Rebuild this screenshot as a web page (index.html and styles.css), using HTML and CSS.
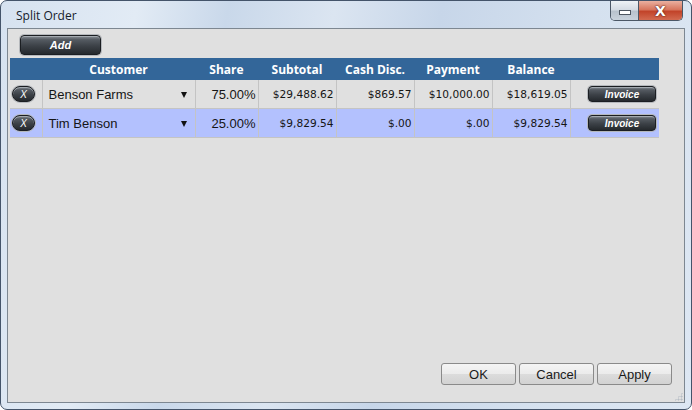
FILE: index.html
```html
<!DOCTYPE html>
<html lang="en">
<head>
    <meta charset="UTF-8">
    <title>Split Order</title>
    <link rel="stylesheet" href="styles.css">
</head>
<body>
    <div class="window">
        <div class="titlebar">
            <span class="title">Split Order</span>
            <div class="controls">
                <button class="min" type="button"><span></span></button>
                <button class="close" type="button">X</button>
            </div>
        </div>
        <div class="client">
            <button class="pill add" type="button">Add</button>
            <table class="grid">
                <colgroup>
                    <col style="width: 32px">
                    <col style="width: 153px">
                    <col style="width: 63px">
                    <col style="width: 78px">
                    <col style="width: 78px">
                    <col style="width: 78px">
                    <col style="width: 78px">
                    <col style="width: 89px">
                </colgroup>
                <thead>
                    <tr>
                        <th></th>
                        <th>Customer</th>
                        <th>Share</th>
                        <th>Subtotal</th>
                        <th>Cash Disc.</th>
                        <th>Payment</th>
                        <th>Balance</th>
                        <th></th>
                    </tr>
                </thead>
                <tbody>
                    <tr>
                        <td class="del"><button class="pill remove" type="button">X</button></td>
                        <td class="combo"><span>Benson Farms</span><i class="arrow"></i></td>
                        <td class="share">75.00%</td>
                        <td class="money">$29,488.62</td>
                        <td class="money">$869.57</td>
                        <td class="money">$10,000.00</td>
                        <td class="money">$18,619.05</td>
                        <td class="inv"><button class="pill invoice" type="button">Invoice</button></td>
                    </tr>
                    <tr class="selected">
                        <td class="del"><button class="pill remove" type="button">X</button></td>
                        <td class="combo"><span>Tim Benson</span><i class="arrow"></i></td>
                        <td class="share">25.00%</td>
                        <td class="money">$9,829.54</td>
                        <td class="money">$.00</td>
                        <td class="money">$.00</td>
                        <td class="money">$9,829.54</td>
                        <td class="inv"><button class="pill invoice" type="button">Invoice</button></td>
                    </tr>
                </tbody>
            </table>
            <div class="actions">
                <button class="btn" type="button">OK</button>
                <button class="btn" type="button">Cancel</button>
                <button class="btn" type="button">Apply</button>
            </div>
            <div class="grip"></div>
        </div>
    </div>
</body>
</html>
```

FILE: styles.css
```css
body {
    margin: 0;
    background-color: #ffffff;
    font-family: "Liberation Sans", Arial, sans-serif;
}

.window {
    width: 692px;
    height: 410px;
    box-sizing: border-box;
    border: 1px solid #44546a;
    border-radius: 7px;
    background: linear-gradient(100deg, #d6e2f0 0%, #e2ebf5 18%, #c9d8ea 30%, #dbe5f1 44%, #c7d6e9 58%, #d5e1ef 78%, #dde7f3 100%);
    display: flex;
    flex-direction: column;
    overflow: hidden;
}

.titlebar {
    height: 27px;
    display: flex;
    justify-content: space-between;
    flex-shrink: 0;
}

.title {
    font-family: "Open Sans", sans-serif;
    font-size: 12px;
    color: #15202c;
    padding-left: 15px;
    align-self: center;
    margin-top: 2px;
}

.controls {
    display: flex;
    margin-right: 8px;
    height: 19px;
    border: 1px solid #4b5766;
    border-top: none;
    border-radius: 0 0 5px 5px;
    overflow: hidden;
}

.controls button {
    border: none;
    padding: 0;
    height: 19px;
}

.min {
    width: 28px;
    border-right: 1px solid #4b5766 !important;
    background: linear-gradient(#eef2f6, #d5dce4 45%, #b8c2cd 55%, #c9d2dc);
    display: flex;
    align-items: center;
    justify-content: center;
}

.min span {
    display: block;
    width: 10px;
    height: 3px;
    margin-top: 3px;
    background-color: #ffffff;
    border: 1px solid #4d5560;
}

.close {
    width: 43px;
    background: linear-gradient(#eab0a0, #d7765e 45%, #c2442a 55%, #d26a50);
    color: #ffffff;
    font-family: "DejaVu Sans", sans-serif;
    font-weight: bold;
    font-size: 14px;
    text-shadow: 0 0 2px #5a1a10, 0 0 1px #5a1a10;
}

.client {
    flex: 1;
    margin: 0 6px 6px;
    border: 1px solid #7d8791;
    background-color: #e0e0e0;
    position: relative;
    display: flex;
    flex-direction: column;
    align-items: flex-start;
    padding: 6px 0 0 2px;
}

.pill {
    border: 1px solid #1b1e22;
    background: linear-gradient(#8a9097, #555b62 20%, #3c4147 55%, #25292d);
    box-shadow: 0 0 0 1px #b5b8bc, inset 0 1px 0 #a3a9af;
    color: #ffffff;
    font-family: "Liberation Sans", Arial, sans-serif;
    font-weight: bold;
    font-style: italic;
    padding: 0;
    cursor: pointer;
}

.add {
    width: 81px;
    height: 20px;
    margin-left: 10px;
    border-radius: 4px;
    font-size: 11px;
}

.remove {
    width: 23px;
    height: 16px;
    border-radius: 8px;
    font-size: 10px;
    font-weight: normal;
    margin-left: 2px;
    display: block;
}

.invoice {
    width: 68px;
    height: 16px;
    border-radius: 4px;
    font-size: 10px;
    display: block;
    margin-left: auto;
    margin-right: 1px;
}

.grid {
    margin-top: 3px;
    width: 649px;
    table-layout: fixed;
    border-collapse: collapse;
}

.grid th {
    height: 22px;
    padding: 0;
    background-color: #336699;
    color: #ffffff;
    font-family: "Open Sans", sans-serif;
    font-size: 12px;
    font-weight: bold;
    text-align: center;
}

.grid td {
    height: 28px;
    padding: 0 2px 0 0;
    border-right: 1px solid #c4c4c4;
    border-bottom: 1px solid #c4c4c4;
    color: #151515;
    text-align: right;
    white-space: nowrap;
}

.grid td:last-child {
    border-right: none;
}

.selected td {
    background-color: #b3c1fe;
}

.combo {
    text-align: left !important;
    font-size: 13px;
    padding: 0 8px 0 6px !important;
}

.combo span {
    float: left;
    margin-top: 1px;
}

.arrow {
    float: right;
    width: 0;
    height: 0;
    margin-top: 6px;
    border-left: 3.5px solid transparent;
    border-right: 3.5px solid transparent;
    border-top: 6px solid #111111;
}

.share {
    font-size: 13px;
}

.money {
    font-family: "DejaVu Sans", sans-serif;
    font-size: 10.6px;
}

.actions {
    margin-top: auto;
    margin-bottom: 17px;
    align-self: flex-end;
    margin-right: 12px;
    display: flex;
    gap: 3px;
}

.btn {
    width: 75px;
    height: 22px;
    border: 1px solid #8a8a8a;
    border-radius: 3px;
    background: linear-gradient(#f4f4f4, #ebebeb 50%, #dcdcdc 51%, #d2d2d2);
    font-family: "Liberation Sans", Arial, sans-serif;
    font-size: 13px;
    color: #1a1a1a;
    padding: 0;
}

.grip {
    position: absolute;
    right: 1px;
    bottom: 1px;
    width: 9px;
    height: 9px;
    background: radial-gradient(circle, #b8bec6 45%, transparent 50%) 0 0 / 3px 3px;
    clip-path: polygon(100% 0, 100% 100%, 0 100%);
}
```
